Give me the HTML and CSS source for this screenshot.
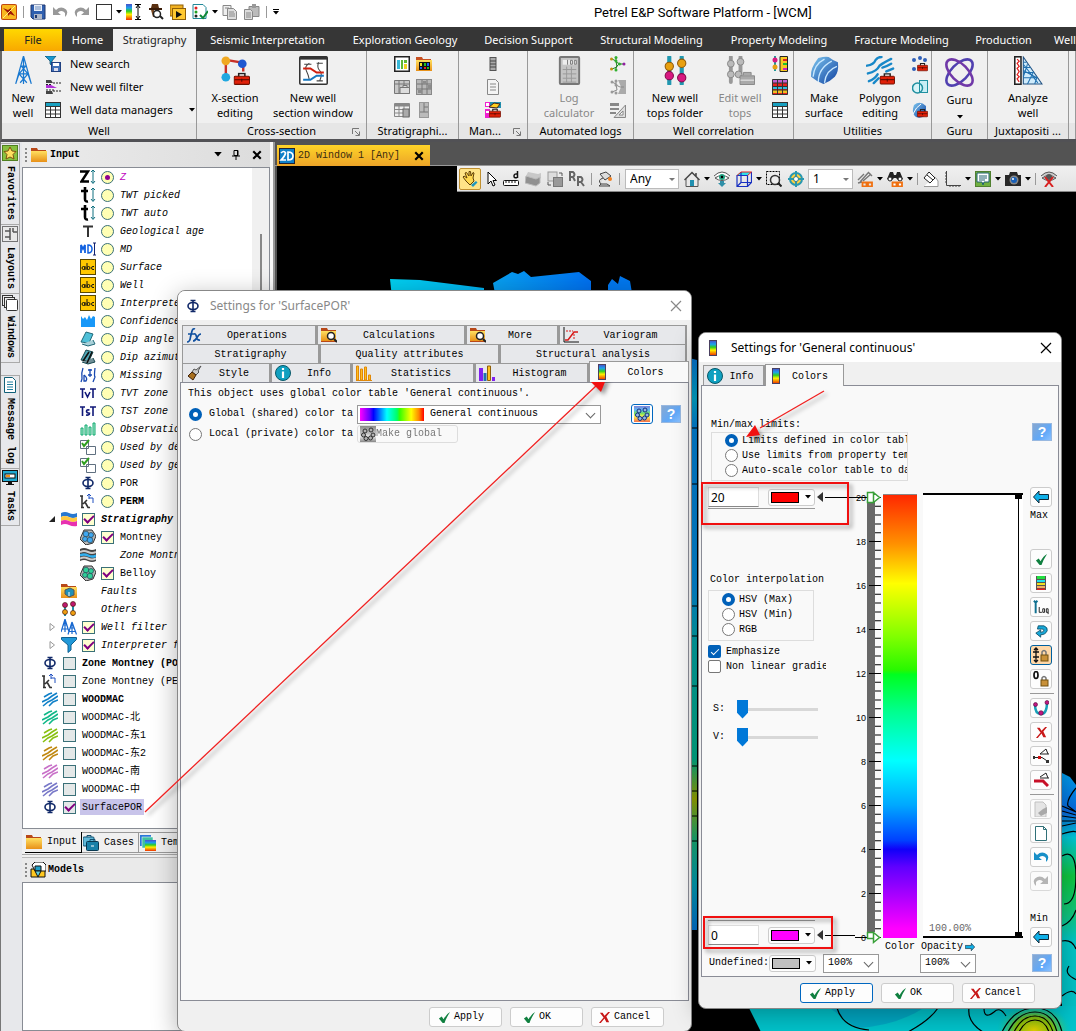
FILE: index.html
```html
<!DOCTYPE html>
<html lang="en">
<head>
<meta charset="utf-8">
<title>Petrel E&amp;P Software Platform - [WCM]</title>
<link rel="stylesheet" href="styles.css">
</head>
<body>
<svg class="sprite" aria-hidden="true">
  <defs>
    <linearGradient id="spectrum" x1="0" y1="0" x2="0" y2="1"><stop offset="0" stop-color="#4a50c8"/><stop offset=".25" stop-color="#1ba0f0"/><stop offset=".45" stop-color="#30d020"/><stop offset=".65" stop-color="#fff000"/><stop offset="1" stop-color="#f03000"/></linearGradient>
    <linearGradient id="blueish" x1="0" y1="0" x2="1" y2="1"><stop offset="0" stop-color="#7ec8f0"/><stop offset="1" stop-color="#1040a0"/></linearGradient>
    <linearGradient id="gold" x1="0" y1="0" x2="0" y2="1"><stop offset="0" stop-color="#ffe060"/><stop offset="1" stop-color="#e89018"/></linearGradient>
  </defs>
  <symbol id="toolbox" viewBox="0 0 16 12"><path d="M5 4V1h6v3" fill="none" stroke="#222" stroke-width="1.5"/><rect x=".5" y="3.500" width="15" height="8" rx="1" fill="#e02008" stroke="#701000"/><path d="M1 7h14M8 6v3" stroke="#500800"/></symbol>
  <symbol id="caret" viewBox="0 0 6 4"><path d="M0 0h6L3 3.500z" fill="currentColor"/></symbol>
  <symbol id="logo" viewBox="0 0 16 16"><rect width="16" height="16" rx="2" fill="#c04810"/><rect x="1" y="1" width="14" height="14" rx="1" fill="#f8b820"/><path d="M2 4l5 2 3-2v3l4 5-5-2-2 2V9z" fill="#a01808"/><path d="M14 2L2 14" stroke="#fff080"/></symbol>
  <symbol id="save" viewBox="0 0 16 16"><path d="M1 1h14v14H3l-2-2z" fill="#3060b0" stroke="#203870"/><rect x="4" y="1" width="8" height="6" fill="#e8eef8"/><path d="M5 3h6M5 5h6" stroke="#7090c0"/><rect x="4" y="10" width="8" height="5" fill="#b0b8c8"/><rect x="5" y="11" width="2" height="3" fill="#203870"/></symbol>
  <symbol id="undo" viewBox="0 0 16 16"><path d="M1 3v8h8L6 8.500q4-3 7 .5v4q4-4 1-7.500-5-4-10 .5z" fill="currentColor"/></symbol>
  <symbol id="redo" viewBox="0 0 16 16"><path d="M15 3v8H7l3-2.500Q6 5.500 3 9v4Q-1 9 2 5.500q5-4 10 .5z" fill="currentColor"/></symbol>
  <symbol id="box" viewBox="0 0 16 16"><rect x=".5" y=".5" width="15" height="15" fill="#fff" stroke="#333"/></symbol>
  <symbol id="rangebar" viewBox="0 0 16 16"><rect width="6" height="16" fill="url(#spectrum)"/><path d="M9 .5h6M9 15.500h6M12 2v12M10 4l2-3 2 3M10 12l2 3 2-3" fill="none" stroke="#000"/></symbol>
  <symbol id="detective" viewBox="0 0 16 16"><path d="M4 0h6l1 4H3z" fill="#5a3010"/><path d="M1 4h13v2H1z" fill="#3a1c08"/><path d="M3 6l2 7h2l-1-7z" fill="#7a4820"/><circle cx="9" cy="10" r="3.500" fill="#fff" stroke="#222" stroke-width="1.500"/><path d="M12 12l3 3" stroke="#222" stroke-width="2"/></symbol>
  <symbol id="play" viewBox="0 0 16 16"><rect x="0" y="1" width="13" height="11" fill="#f0b020" stroke="#906008"/><rect x="2.500" y="4.500" width="13" height="11" fill="#ffc830" stroke="#906008"/><path d="M6 7v7l6-3.500z" fill="#111"/></symbol>
  <symbol id="checklist" viewBox="0 0 16 16"><path d="M1 .5h10l3 3v11H1z" fill="#fff" stroke="#208898"/><circle cx="4" cy="4" r="1.500" fill="#e02020"/><circle cx="4" cy="8" r="1.500" fill="#20a020"/><circle cx="4" cy="12" r="1.500" fill="#222"/><path d="M8 11l3 3 5-7" fill="none" stroke="#108838" stroke-width="2"/></symbol>
  <symbol id="copy" viewBox="0 0 16 16"><path d="M1 1.500h8v10H1z" fill="#eee" stroke="#888"/><path d="M5.500 4.500h6l3 3v8h-9z" fill="#ddd" stroke="#888"/><path d="M7 8h5M7 10h6M7 12h6M3 4h4" stroke="#888"/></symbol>
  <symbol id="paste" viewBox="0 0 16 16"><path d="M5 2.500h10v10H5z" fill="#bbb" stroke="#888"/><rect x="8" y="0" width="4" height="4" fill="#999"/><path d="M.5 5.500h6l2 2v8h-8z" fill="#ddd" stroke="#888"/><path d="M2 9h5M2 11h5M2 13h5" stroke="#888"/></symbol>
  <symbol id="derrick" viewBox="0 0 16 26"><path d="M8 0L1 25M8 0l7 25M8 0v25M5.500 9h5M4 16h8M6 9l6 7 3 9M10 9l-6 7-3 9M4 16l7 8M12 16l-7 8" fill="none" stroke="#1878d0" stroke-width="1.100"/></symbol>
  <symbol id="search" viewBox="0 0 16 16"><path d="M0 0h11L7 5v5L5 8V5z" fill="#1898d0" stroke="#084868" stroke-width=".7"/><rect x="6.500" y="6.500" width="9" height="9" fill="#4070b8" stroke="#204080"/><rect x="8" y="7" width="6" height="3" fill="#fff"/><rect x="9" y="12" width="4" height="3" fill="#dde"/></symbol>
  <symbol id="wellfilter" viewBox="0 0 16 16"><path d="M1 1h5l2 3H1zM1 12h6l1 3H1z" fill="#444"/><path d="M1 6h5l6 3H1z" fill="#b030d8"/><path d="M8 4h8M8 12h8M1 11h8M1 5.500h6" stroke="#222" stroke-dasharray="2 1"/></symbol>
  <symbol id="table" viewBox="0 0 16 16"><rect x=".5" y=".5" width="15" height="15" fill="#fff" stroke="#333"/><rect x="1" y="1" width="14" height="3" fill="#18a0c0"/><path d="M1 4.500h14M1 8h14M1 12h14M5.500 4v11M10.500 4v11" stroke="#333"/></symbol>
  <symbol id="xsection" viewBox="0 0 30 30"><path d="M5 4l18 3v9M5 4v17" fill="none" stroke="#c83028" stroke-width="2.500"/><circle cx="5" cy="5" r="4.500" fill="#f0a820"/><circle cx="22" cy="8" r="4.500" fill="#2058d0"/><circle cx="5" cy="22" r="4.500" fill="#20a8e0"/><use href="#toolbox" x="13" y="17" width="17" height="13"/></symbol>
  <symbol id="sectionwin" viewBox="0 0 28 28"><rect x=".75" y=".75" width="26.500" height="26.500" rx="1" fill="#fff" stroke="#333" stroke-width="1.500"/><path d="M1 2h26" stroke="#333" stroke-width="3"/><path d="M10 7q-5 3-3 7t3 9M19 6q-2 5 1 8t0 10M5 8h7M17 7h6M17 24h6" fill="none" stroke="#444"/><path d="M4 12h7l6 4h7" fill="none" stroke="#d02010" stroke-width="2"/><path d="M4 23h7l6-4h7" fill="none" stroke="#1878c0" stroke-width="2"/></symbol>
  <symbol id="strat1" viewBox="0 0 16 16"><rect x=".75" y=".75" width="14.500" height="14.500" fill="#fff" stroke="#222" stroke-width="1.500"/><path d="M3 4h3v9H3z" fill="#38b8d8"/><path d="M7 4h2v9H7zM10 4h3v3h-3z" fill="#60b830"/><path d="M10 8h3v5h-3z" fill="#f0d020"/></symbol>
  <symbol id="strat2" viewBox="0 0 16 16"><path d="M0 1h6l1 2h8v12H0z" fill="#c85020"/><path d="M0 4h16v11H0z" fill="url(#gold)"/><path d="M3 6h11v8H3z" fill="#111"/><path d="M4 7h2v3H4z" fill="#f0e020"/><path d="M8 7h2v3H8zM11 11h2v2h-2z" fill="#20c020"/><path d="M11 7h2v3h-2zM4 11h2v2H4z" fill="#2060f0"/><path d="M8 11h2v2H8z" fill="#f02020"/></symbol>
  <symbol id="grid-box" viewBox="0 0 16 16"><path d="M.5 1.500h15v13H.5zM.5 5h15M5 1v13M10 1v5" fill="#c8c8c8" stroke="#777"/><path d="M6 8.500h9.500v6H6zM9 8V6.500h4V8" fill="#ddd" stroke="#777"/></symbol>
  <symbol id="grid-gray" viewBox="0 0 16 16"><rect x=".5" y=".5" width="15" height="15" fill="#b8b8b8" stroke="#888"/><path d="M1 5h14M1 10h14M6 1v14M11 1v14" stroke="#777"/><path d="M7 2h3v3H7zM12 6h3v4h-3zM2 11h4v3H2z" fill="#8c8c8c"/></symbol>
  <symbol id="table-gray" viewBox="0 0 16 16"><path d="M.5 1.500h15v13H.5z" fill="#eee" stroke="#888"/><path d="M1 3h14" stroke="#888" stroke-width="3"/><path d="M1 7.500h9M1 11h9M5 3v11M10 3v11" stroke="#888"/><rect x="9" y="7" width="6" height="8" fill="#aaa" stroke="#666"/></symbol>
  <symbol id="panel-gray" viewBox="0 0 16 16"><rect x="3.500" y=".5" width="9" height="15" fill="#bbb" stroke="#999"/><path d="M8 1v9M4 10h8M8 5h4" stroke="#777"/></symbol>
  <symbol id="bars-gray" viewBox="0 0 16 16"><rect x="5" y="1.500" width="6" height="13" fill="#aaa" stroke="#555"/><path d="M5 5h6M5 8h6M5 11h6" stroke="#444"/></symbol>
  <symbol id="page-gray" viewBox="0 0 16 16"><path d="M2.500.5h8l3 3v12h-11z" fill="#f4f4f4" stroke="#888"/><path d="M5 5h6M5 8h6M5 11h6" stroke="#888"/></symbol>
  <symbol id="manage" viewBox="0 0 16 16"><path d="M0 0h5v5H0zM0 7h5v9H0z" fill="#f020d0"/><path d="M1 1h3v3H1zM1 9h3v2H1z" fill="#fff"/><path d="M5 0h11v6H5z" fill="#2090b0"/><path d="M4 5l5-4 6 1-3 4z" fill="#ffd020" stroke="#422"/><use href="#toolbox" x="4" y="6" width="12" height="10"/></symbol>
  <symbol id="calc" viewBox="0 0 22 30"><rect x="1" y="1" width="20" height="28" rx="1" fill="#c4c4c4" stroke="#777" stroke-width="2"/><rect x="4" y="4" width="14" height="5" fill="#eee"/><path d="M9 4v5M12 4.500h2v4h-2zM16 4.500h2v4h-2z" fill="none" stroke="#777"/><path d="M4 14h14M4 18.500h14M4 23h14M4 27h14M8 11v16M13 11v16" stroke="#999"/></symbol>
  <symbol id="tree-color" viewBox="0 0 16 16"><path d="M2 3l4 2 1 6-5 2M6 2v4l4 2h4M6 14v-3l3-3" fill="none" stroke="#208020"/><g fill="#30b030"><circle cx="6" cy="1.500" r="1.500"/><circle cx="6" cy="5" r="1.500"/><circle cx="6" cy="14" r="1.500"/><circle cx="9.500" cy="8" r="1.500"/></g><circle cx="1.500" cy="3" r="1.500" fill="#c09010"/><circle cx="1.500" cy="13" r="1.500" fill="#c09010"/><circle cx="14" cy="8" r="1.500" fill="#9020a0"/></symbol>
  <symbol id="tree-gray" viewBox="0 0 16 16"><path d="M8 1h8v14H8l3-7z" fill="#aaa"/><path d="M2 3l4 2 1 6-5 2M6 2v4l4 2h4" fill="none" stroke="#888"/><g fill="#999"><circle cx="6" cy="2" r="1.500"/><circle cx="6" cy="6" r="1.500"/><circle cx="6" cy="14" r="1.500"/><circle cx="2" cy="3" r="1.500"/><circle cx="2" cy="13" r="1.500"/></g></symbol>
  <symbol id="tri-gray" viewBox="0 0 16 16"><path d="M0 1h9v3H0zM0 6h9v2H0zM0 10h6v2H0z" fill="#888"/><path d="M15.500 3v12.500H4z" fill="#ddd" stroke="#888"/><path d="M13 9v4h-4z" fill="#fff" stroke="#888"/></symbol>
  <symbol id="tops" viewBox="0 0 22 28"><path d="M5 1v26M17 1v26" stroke="#2098b0" stroke-width="4" stroke-linecap="round"/><circle cx="5" cy="10" r="4" fill="#e8a010" stroke="#905808"/><circle cx="17" cy="7" r="4" fill="#e8a010" stroke="#905808"/><circle cx="5" cy="19" r="4" fill="#d81880" stroke="#800848"/><circle cx="17" cy="21" r="4" fill="#d81880" stroke="#800848"/></symbol>
  <symbol id="tops-gray" viewBox="0 0 30 30"><path d="M5 1v26M15 1v20" stroke="#999" stroke-width="4" stroke-linecap="round"/><g fill="#bbb" stroke="#888"><circle cx="5" cy="8" r="3.500"/><circle cx="5" cy="19" r="3.500"/><circle cx="15" cy="6" r="3.500"/><circle cx="13" cy="19" r="3.500"/><path d="M14.500 20.500h15v9h-15zM18 20v-3h8v3" fill="#aaa"/></g><path d="M15 25h14" stroke="#eee"/></symbol>
  <symbol id="corr1" viewBox="0 0 16 16"><path d="M3 0v15" stroke="#209898" stroke-width="2"/><circle cx="3" cy="4" r="2.500" fill="#d81880"/><circle cx="3" cy="11" r="2.500" fill="#e8a010"/><path d="M8 .5h7.500v15H8z" fill="#f8c820" stroke="#222"/><path d="M11 4h4" stroke="#e02020" stroke-width="2"/><path d="M11 8h4" stroke="#20c030" stroke-width="2"/><path d="M11 13h4" stroke="#d020c0" stroke-width="2"/></symbol>
  <symbol id="corr2" viewBox="0 0 16 16"><path d="M.5.5h15v15H.5z" fill="#e82020" stroke="#333"/><path d="M1 1h14v3H1z" fill="#c060d0"/><path d="M1 8h14v2H1z" fill="#30c0e0"/><path d="M1 11h14v3H1z" fill="#f0c020"/><path d="M1 4h14M1 7.500h14M1 11h14M5.500 1v14M10.500 1v14" stroke="#333"/></symbol>
  <symbol id="surface" viewBox="0 0 28 28"><path d="M8 2q7-2 10-1 5 4 9 5 1 9-3 14-5 5-11 7Q7 25 1 20 0 12 8 2z" fill="url(#blueish)"/><path d="M3 20Q4 8 14 3M8 25Q8 12 21 5M14 26q1-12 12-16" fill="none" stroke="#c8e8ff" stroke-width="1.300"/></symbol>
  <symbol id="polygon" viewBox="0 0 30 30"><path d="M1 10q7-1 9-6 2-3 6-3M2 18q9-2 12-8 4-3 12-7M3 26q6-2 9-7M17 12q4-1 9-4M21 16l7-3M8 28l5-5" fill="none" stroke="#1888c8" stroke-width="2.500" stroke-linecap="round"/><use href="#toolbox" x="14" y="17" width="16" height="13"/></symbol>
  <symbol id="util1" viewBox="0 0 16 16"><g fill="#3060b8"><circle cx="2" cy="4" r="2"/><circle cx="8" cy="2" r="2"/><circle cx="13" cy="4" r="2"/><circle cx="2" cy="13" r="2"/></g><use href="#toolbox" x="5" y="6" width="11" height="10"/></symbol>
  <symbol id="util2" viewBox="0 0 16 16"><rect x="7.500" y="1.500" width="8" height="12" fill="#c8eef4" stroke="#2090a0"/><circle cx="5.500" cy="9" r="5" fill="#d8f4f8" stroke="#2090a0" stroke-width="1.500"/><path d="M7.500 4v9" stroke="#2090a0"/></symbol>
  <symbol id="util3" viewBox="0 0 16 16"><path d="M2 3q6-5 12 1v9q-5 4-10 2-5-4-2-12z" fill="url(#blueish)"/><path d="M1 12Q4 5 9 2" stroke="#fff" fill="none"/><use href="#toolbox" x="5" y="6" width="11" height="10"/></symbol>
  <symbol id="guru" viewBox="0 0 28 28"><g fill="none" stroke="#5040b0" stroke-width="2.500"><ellipse cx="14" cy="14" rx="8" ry="16" transform="rotate(45 14 14)"/><ellipse cx="14" cy="14" rx="8" ry="16" transform="rotate(-45 14 14)" stroke="#7038a8"/></g></symbol>
  <symbol id="analyze" viewBox="0 0 28 28"><rect x=".75" y=".75" width="6" height="26.500" fill="#fff" stroke="#222" stroke-width="1.500"/><path d="M3 3l2 2-2 2 2 3-2 2 2 3-2 3 2 2-2 2 2 3" fill="none" stroke="#e02020" stroke-width="1.200"/><path d="M9 1v26h18z" fill="#d0ecfc" stroke="#205080"/><path d="M9 6h3M9 11h7M9 16h10M9 21h14M9 14l13 7M9 8l14 18M13 27l6-12M9 20l4-12M20 27l2-6" fill="none" stroke="#2070b0"/></symbol>
  <symbol id="launcher" viewBox="0 0 8 8"><path d="M.5 6V.5H7M3 3l4 4M7.500 3.500v4h-4" fill="none" stroke="#777"/></symbol>
  <symbol id="star" viewBox="0 0 16 16"><rect x=".5" y=".5" width="15" height="15" fill="#88c040" stroke="#508020"/><path d="M8 2l2 4 4 .5-3 3 1 4.500-4-2-4 2 1-4.500-3-3L6 6z" fill="#ffe060" stroke="#805010"/></symbol>
  <symbol id="layouts" viewBox="0 0 16 16"><rect x=".5" y=".5" width="15" height="15" fill="#e8e8e8" stroke="#000" stroke-dasharray="1 1"/><path d="M3 5h5M8 2v12M11 6h4M11 2v4M3 11h5" stroke="#555" stroke-width="1.500"/></symbol>
  <symbol id="windows" viewBox="0 0 16 16"><g fill="#eee" stroke="#333"><rect x=".5" y=".5" width="10" height="10"/><rect x="2.500" y="2.500" width="10" height="10"/><rect x="4.500" y="4.500" width="11" height="11" rx="1" fill="#fff"/></g></symbol>
  <symbol id="note" viewBox="0 0 16 16"><path d="M2.500.5h8l3 3v12h-11z" fill="#fff" stroke="#106078"/><path d="M5 5h6M5 7.500h6M5 10h6M5 12.500h6" stroke="#2080a0"/></symbol>
  <symbol id="tasks" viewBox="0 0 16 16"><rect x=".5" y=".5" width="15" height="11" fill="#20a8d0" stroke="#111"/><rect x="3" y="4" width="10" height="4" fill="#fff" stroke="#111"/><path d="M4 6h4" stroke="#f09010" stroke-width="2"/><path d="M6 12h4v2h2v1H4v-1h2z" fill="#111"/></symbol>
  <symbol id="folder" viewBox="0 0 16 14"><path d="M0 0h6l1 2h8v3H0z" fill="#b84818"/><path d="M0 3h16v11H0z" fill="url(#gold)"/></symbol>
  <symbol id="pin" viewBox="0 0 8 10"><path d="M2 .5h4v5H2zM0 6h8M4 6v4" fill="none" stroke="#000"/><path d="M5 1h1v5H5z"/></symbol>
  <symbol id="cross" viewBox="0 0 8 8"><path d="M1 1l6 6M7 1L1 7" stroke="currentColor" stroke-width="1.700"/></symbol>
  <symbol id="thincross" viewBox="0 0 12 12"><path d="M1 1l10 10M11 1L1 11" stroke="currentColor" stroke-width="1.200"/></symbol>
  <symbol id="zarrow" viewBox="0 0 16 16"><path d="M0 2.500h8L1.500 12.500H9" fill="none" stroke="#000" stroke-width="2.400"/><path d="M13 1v13M11 3l2-2 2 2M11 12l2 2.500 2-2.500" fill="none" stroke="#107080"/></symbol>
  <symbol id="tarrow" viewBox="0 0 16 16"><path d="M5 0v12q0 3 3 2.500M1 4h7" fill="none" stroke="#000" stroke-width="2.600"/><path d="M13 1v13M11 3l2-2 2 2M11 12l2 2.500 2-2.500" fill="none" stroke="#107080"/></symbol>
  <symbol id="tee" viewBox="0 0 16 16"><path d="M3 3.500h10M8 3v11" stroke="#333" stroke-width="2"/></symbol>
  <symbol id="md" viewBox="0 0 16 16"><path d="M1 12V4l2 4 2-4v8" fill="none" stroke="#1060e0" stroke-width="1.800"/><path d="M8 4v8q4 0 4-4T8 4z" fill="none" stroke="#1060e0" stroke-width="1.500"/><path d="M14.500 2v12M13 2h3M13 14h3" stroke="#102070"/></symbol>
  <symbol id="abc" viewBox="0 0 16 16"><rect x=".5" y=".5" width="15" height="15" fill="#ffc800" stroke="#5a4800"/><g fill="none" stroke="#111"><circle cx="3.500" cy="9" r="1.500"/><path d="M5 7v4M7 4v7M11 4"/><circle cx="8.500" cy="9" r="1.500"/><path d="M14 7.500q-2.500-.5-2.500 1.500t2.500 1.500"/></g></symbol>
  <symbol id="conf" viewBox="0 0 16 16"><path d="M1 14V3l2 3 2-2 2 3 2-5 2 4 2-3 2 1v10z" fill="#1898f8"/></symbol>
  <symbol id="dip" viewBox="0 0 16 16"><path d="M6 1l7 2-4 9-8-1z" fill="#50c0d8" stroke="#206878"/><path d="M13 9l2 4-7 2-6-2" fill="#a8d0d8" stroke="#206878"/></symbol>
  <symbol id="azi" viewBox="0 0 16 16"><path d="M6 1l7 2-4 9-8-1z" fill="#50a8b8" stroke="#184850"/><path d="M13 9l2 4-7 2-6-2" fill="#709098" stroke="#184850"/><path d="M9 3l-6 9M12 3l-5 11" stroke="#111" stroke-width="1.600"/></symbol>
  <symbol id="missing" viewBox="0 0 16 16"><path d="M3 1Q1 6 2 12l-1 3M15 1q-1 8 0 9l-2 5M4 8v6h2q2-3-2-6M10 2v8M8 3h4M8 8h4" fill="none" stroke="#1848b0" stroke-width="1.300"/></symbol>
  <symbol id="tvt" viewBox="0 0 16 16"><path d="M0 4h5M2.500 4v9M5 7l2.500 5L10 7M10 4h6M13 4v9" fill="none" stroke="#101878" stroke-width="1.600"/></symbol>
  <symbol id="tst" viewBox="0 0 16 16"><path d="M0 4h5M2.500 4v9M9.500 7q-3-.5-3 1.200t3 2q0 2.300-3.500 1.800M10 4h6M13 4v9" fill="none" stroke="#101878" stroke-width="1.600"/></symbol>
  <symbol id="obs" viewBox="0 0 16 16"><path d="M1 14V7h2v7zM5 14V4h2v10zM9 14V6h2v8zM13 14V2h2v12z" fill="#b0f0d0" stroke="#10a870"/></symbol>
  <symbol id="used" viewBox="0 0 16 16"><path d="M.5 1.500h8v8h-8zM6.500 7.500h9v8h-9z" fill="#fff" stroke="#607080"/><path d="M2 4l2 3 5-6" fill="none" stroke="#30a020" stroke-width="2"/></symbol>
  <symbol id="phi" viewBox="0 0 16 16"><ellipse cx="8" cy="8" rx="5" ry="3.500" fill="none" stroke="#102868" stroke-width="1.600"/><path d="M8 2v12M5.500 2.500h5M5.500 13.500h5" stroke="#102868" stroke-width="1.600"/></symbol>
  <symbol id="perm" viewBox="0 0 16 16"><path d="M2 3v12M0 3h3M1 14.500h3M3 11l4-4M5 9l3 5.500h2" fill="none" stroke="#333" stroke-width="1.600"/><path d="M9 6V1M7 3l2-2 2 2M9 5h4v5" fill="none" stroke="#2050c0"/></symbol>
  <symbol id="strat" viewBox="0 0 16 16"><path d="M0 2q4-2 8 0t8 0v4q-4 2-8 0T0 6z" fill="#2878d0"/><path d="M0 6q4-2 8 0t8 0v4q-4 2-8 0t-8 0z" fill="#ffc840"/><path d="M0 10q4-2 8 0t8 0v5q-4 1-8-1t-8 0z" fill="#e830b0"/></symbol>
  <symbol id="rock" viewBox="0 0 16 16"><path d="M4 1h8l4 6-3 7-7 2-6-6z" fill="#b8b8b8" stroke="#333"/><g fill="currentColor" stroke="#245" stroke-width=".7"><circle cx="6" cy="5" r="2.800"/><circle cx="11" cy="6" r="2.500"/><circle cx="5" cy="10" r="2.500"/><circle cx="10" cy="11" r="2.800"/></g></symbol>
  <symbol id="zone" viewBox="0 0 16 16"><path d="M0 2q4-2 8 0t8 0v12q-4 2-8 0t-8 0z" fill="#444"/><path d="M0 5q4-2 8 0t8 0M0 11.500q4-2 8 0t8 0" fill="none" stroke="#ccc" stroke-width="2"/><path d="M0 8.500q4-2 8 0t8 0" fill="none" stroke="#30b0f0" stroke-width="2.500"/></symbol>
  <symbol id="faults" viewBox="0 0 16 16"><path d="M0 1h6l1 2h8v12H0z" fill="#b84818"/><path d="M0 4h16v11H0z" fill="url(#gold)"/><path d="M4 7l5-2 4 2v5l-5 2-4-3z" fill="#2090b8" stroke="#555"/><path d="M8 9v4" stroke="#fff"/></symbol>
  <symbol id="others" viewBox="0 0 16 16"><path d="M4 2v13M12 2v13" stroke="#2090a8" stroke-width="2"/><g stroke="#502010" stroke-width=".7"><circle cx="4" cy="4" r="2.500" fill="#c01870"/><circle cx="12" cy="3" r="2.500" fill="#c01870"/><circle cx="4" cy="11" r="2.500" fill="#f0a010"/><circle cx="12" cy="12" r="2.500" fill="#f0a010"/></g></symbol>
  <symbol id="wells" viewBox="0 0 16 16"><path d="M4 0L0 13M4 0l4 13M4 0v13M2 6h4M1 10h6M11 3L7 15.500M11 3l4.500 12.500M11 3v12M9 9h4M8 12.500h6" fill="none" stroke="#1868d0" stroke-width="1.200"/></symbol>
  <symbol id="funnel" viewBox="0 0 16 16"><path d="M.5.5h15v2L10 8v5l-3 2.500V8L.5 2.500z" fill="#2098d8" stroke="#106090"/></symbol>
  <symbol id="lines" viewBox="0 0 16 16"><path d="M2 6l5-3 3-1M0 11l6-3 4-3 5-3M1 15l5-4 4-2 6-4M7 15l4-4 5-2" fill="none" stroke="currentColor" stroke-width="1.600"/></symbol>
  <symbol id="cases" viewBox="0 0 16 16"><rect y="2" width="11" height="9" rx="1" fill="#60b8d8" stroke="#105070"/><path d="M4 2V.5h4V2M7 6V4.500h5V6" fill="none" stroke="#105070"/><rect x="3.500" y="6.500" width="12" height="9" rx="1" fill="#1880a8" stroke="#083850"/><path d="M8 11h3" stroke="#fff"/></symbol>
  <symbol id="templates" viewBox="0 0 16 16"><rect width="11" height="11" fill="#2878d8"/><rect x="2" y="2" width="11" height="11" fill="#40c0a0" stroke="#fff" stroke-width=".5"/><rect x="5" y="5" width="11" height="11" fill="url(#spectrum)"/></symbol>
  <symbol id="models" viewBox="0 0 16 16"><path d="M1 7h14v8H1z" fill="#ffc820" stroke="#111"/><path d="M2 3l3-3h8l3 3v6H5z" fill="#fff" stroke="#111"/><path d="M5 4h6v5H5z" fill="#20a0c8" stroke="#111"/><path d="M5 9h6l-3 6z" fill="#60d0e0" stroke="#111"/></symbol>
  <symbol id="icon2d" viewBox="0 0 16 16"><rect x=".5" y=".5" width="15" height="15" fill="#1080c8" stroke="#223"/><path d="M2 5q3-3 4.500 0Q6 8 2 12h5M9 4v8q5 0 5-4T9 4z" fill="none" stroke="#fff" stroke-width="1.700"/></symbol>
  <symbol id="hand" viewBox="0 0 16 16"><path d="M4 10L1 6l1-1 3 2-2-5 1.500-.5L7 5 7 .5h1.500L9 5l2-3.500L12 2l-1 5 1 3-4 4z" fill="#ffd850" stroke="#604008"/><path d="M9 14l5-4 1.500 1.500L11 16z" fill="#2098c0"/></symbol>
  <symbol id="pointer" viewBox="0 0 10 16"><path d="M1 1v12l3-3 2 5 2-1-2-4.500h3.500z" fill="#fff" stroke="#000"/></symbol>
  <symbol id="ruler" viewBox="0 0 16 16"><rect x=".5" y="9.500" width="15" height="5" rx="1" fill="#fff" stroke="#111"/><path d="M3 10v2M6 10v2M9 10v2M12 10v2" stroke="#111"/><path d="M14.500 0v7M14 3q-3-.5-3 2t3 1.500" fill="none" stroke="#111" stroke-width="1.500"/></symbol>
  <symbol id="layers" viewBox="0 0 16 16"><path d="M3 1l10 2 3-1v5l-4 3-12-3z" fill="#c8c8c8"/><path d="M1 5l10 3 4-2v6l-4 3-11-3z" fill="#909090" stroke="#bbb"/></symbol>
  <symbol id="swap" viewBox="0 0 16 16"><rect x="1" y="1" width="9" height="9" fill="#ddd" stroke="#999"/><rect x="6.500" y="6.500" width="9" height="9" fill="#999" stroke="#777"/><path d="M12 2h3v3M4 14H1v-3" fill="none" stroke="#555"/></symbol>
  <symbol id="rr" viewBox="0 0 16 16"><path d="M1 10V1h3q3 2.500 0 5H1M4 6l2 4M9 15V6h3q3 2.500 0 5H9M12 11l3 4" fill="none" stroke="#666" stroke-width="2"/></symbol>
  <symbol id="lamp" viewBox="0 0 16 16"><path d="M2 15h11l-3-2H4zM4 13q-4-4 2-6M3 3l6-2 5 4-6 4z" fill="#ddd" stroke="#444"/><circle cx="13" cy="8" r="2" fill="#f08020"/></symbol>
  <symbol id="home" viewBox="0 0 16 16"><path d="M2 8v7.500h12V8" fill="#e8e8e8" stroke="#555"/><path d="M.5 9L8 1.500 15.500 9M12 2v4" fill="none" stroke="#444" stroke-width="1.500"/><rect x="6" y="9" width="4" height="6" fill="#2090b0"/></symbol>
  <symbol id="eye" viewBox="0 0 16 16"><path d="M0 5q8-8 16 0M1 7q7-5 14 0-7 5-14 0z" fill="#fff" stroke="#555"/><circle cx="8" cy="6" r="3" fill="#20a080"/><circle cx="8" cy="6" r="1.200"/><path d="M6 10h4v2h2l-4 4-4-4h2z" fill="#3090a8"/></symbol>
  <symbol id="cube" viewBox="0 0 16 16"><path d="M1 4l4-3h10l-3 3z" fill="#30e0e8"/><path d="M1 4.500h10.500v11H1zM5 1v10.500h10.500M5 11.500l-4 4M11.500 15.500l4-4V1" fill="none" stroke="#1830c0" stroke-width="1.200"/><path d="M1 4.500L5 1h10.500l-4 3.500" fill="none" stroke="#e02020"/></symbol>
  <symbol id="zoombox" viewBox="0 0 16 16"><rect x=".5" y=".5" width="13" height="13" fill="none" stroke="#000" stroke-dasharray="2 1"/><circle cx="9" cy="9" r="4.500" fill="#eee" stroke="#333" stroke-width="1.500"/><path d="M12 12l3.500 3.500" stroke="#222" stroke-width="2"/></symbol>
  <symbol id="target" viewBox="0 0 16 16"><circle cx="8" cy="8" r="6" fill="#ffd040" stroke="#2898b0" stroke-width="2"/><circle cx="8" cy="8" r="2.500" fill="#fff" stroke="#207888"/><path d="M8 0v5M8 11v5M0 8h5M11 8h5" stroke="#2898b0" stroke-width="2"/></symbol>
  <symbol id="linkpts" viewBox="0 0 16 16"><path d="M1 9l6-6M3 11l8-9M6 10l8-7M1 12l4-1M11 1l4 4" stroke="#777" stroke-width="1.400"/><path d="M5.500 11.500h4v4h-4zM11 11.500h4v4h-4z" fill="none" stroke="#f07010" stroke-width="1.800"/></symbol>
  <symbol id="binoc" viewBox="0 0 16 16"><path d="M3 1h3l1 3h2l1-3h3l3 7-4 2-3-3H7l-3 3-4-2z" fill="#222"/><circle cx="3" cy="8" r="2" fill="#fff" stroke="#222"/><circle cx="13" cy="8" r="2" fill="#fff" stroke="#222"/><path d="M5.500 11.500h4v4h-4zM11 11.500h4v4h-4z" fill="#fff" stroke="#f07010" stroke-width="1.800"/></symbol>
  <symbol id="eraser" viewBox="0 0 16 16"><path d="M1 15.500h14V10q-2-4-4-4" fill="#fff" stroke="#999"/><path d="M6 1l6 6-5 5-6-5zM4 4l6 5" fill="#fff" stroke="#222"/></symbol>
  <symbol id="axes" viewBox="0 0 16 16"><path d="M1.500 0v14.500H16M0 2h1M0 5h1M0 8h1M0 11h1M5 15v1M8 15v1M11 15v1M14 15v1" fill="none" stroke="#444"/></symbol>
  <symbol id="comment" viewBox="0 0 16 16"><rect x=".5" y=".5" width="15" height="15" fill="#70b040" stroke="#508030"/><path d="M2 2h12v9H9l-1 3-1-3H2z" fill="#fff" stroke="#206070"/><path d="M4 5h8M4 7h8M4 9h6" stroke="#206070"/></symbol>
  <symbol id="camera" viewBox="0 0 16 16"><path d="M0 4h4l1-3h7l1 3h3v11H0z" fill="#282828"/><circle cx="9" cy="9" r="4.500" fill="#888"/><circle cx="9" cy="9" r="3" fill="#1860b8"/><circle cx="8" cy="8" r="1" fill="#fff"/></symbol>
  <symbol id="eyex" viewBox="0 0 16 16"><path d="M0 5q8-8 16 0M1 7q7-5 14 0-7 5-14 0z" fill="#ccc" stroke="#555"/><circle cx="8" cy="6" r="3" fill="#555"/><path d="M4 6l8 10M12 6L4 16" stroke="#d82020" stroke-width="2"/></symbol>
  <symbol id="fx" viewBox="0 0 16 16"><path d="M1 15q3 0 3.500-5L6 4q1-3 3-2M2 7h6M8 7q2-.5 2.500 3t3.500 3M15 7q-2 0-4 3.500T7 14" fill="none" stroke="#1050a0" stroke-width="1.700"/></symbol>
  <symbol id="foldersearch" viewBox="0 0 16 16"><path d="M0 1h6l1 2h8v12H0z" fill="#b84818"/><path d="M0 4h15v10H0z" fill="url(#gold)"/><circle cx="10" cy="9" r="3.500" fill="#fff" stroke="#222" stroke-width="1.500"/><path d="M13 12l3 3" stroke="#222" stroke-width="2"/></symbol>
  <symbol id="vario" viewBox="0 0 16 16"><path d="M1 0v15h15" fill="none" stroke="#111"/><path d="M2 13h3l6-8h4" fill="none" stroke="#d81818" stroke-width="1.500"/><path d="M3 4h7M11 7v6" stroke="#d81818" stroke-dasharray="2 1"/></symbol>
  <symbol id="brush" viewBox="0 0 16 16"><path d="M15 1l-5 4-2-1-2 3 4 3 3-3-1-1z" fill="#ccc" stroke="#555"/><path d="M6 7l4 3-3 5-5-4z" fill="#a87020" stroke="#402008"/></symbol>
  <symbol id="info" viewBox="0 0 16 16"><circle cx="8" cy="8" r="7.500" fill="#10a0c0" stroke="#085868"/><path d="M8 3v2M8 6.500V13" stroke="#fff" stroke-width="2.200"/></symbol>
  <symbol id="stats" viewBox="0 0 16 16"><path d="M.5 15V1h2v14zM4.500 15V4h2v11zM8.500 15V2h2v13zM12.500 15v-5h2v5z" fill="#ffc020" stroke="#e08808"/><path d="M0 15.500h16" stroke="#e08808"/></symbol>
  <symbol id="histo" viewBox="0 0 16 16"><path d="M0 3h4v13H0zM13 12h3v4h-3z" fill="#8020f0"/><path d="M4.500 8h3v8h-3z" fill="#2070b0"/><path d="M8.500 1h3v14.500h-3z" fill="#ffc020" stroke="#906008"/></symbol>
  <symbol id="colorbar" viewBox="0 0 8 16"><rect x=".5" y=".5" width="7" height="15" fill="url(#spectrum)" stroke="#4a4060"/></symbol>
  <symbol id="palette" viewBox="0 0 16 16"><rect width="16" height="16" fill="url(#spectrum)" opacity=".7"/><g fill="#90b8e0" stroke="#103080"><circle cx="5" cy="5" r="2"/><circle cx="11" cy="4" r="2"/><circle cx="3.500" cy="9" r="2"/><circle cx="13" cy="9" r="2"/><circle cx="6" cy="12.500" r="2"/><circle cx="10.500" cy="12" r="2"/></g></symbol>
  <symbol id="check" viewBox="0 0 14 14"><path d="M1 8l3-2 2 3q3-6 7-8Q9 7 7 13H5z" fill="#108040"/></symbol>
  <symbol id="redx" viewBox="0 0 14 14"><path d="M2 2l3 0 2 3 4-4 2 0-4 5 3 6-3 0-2-4-4 5-2 0 5-6z" fill="#c81818"/></symbol>
  <symbol id="arrowleft" viewBox="0 0 16 14"><path d="M.5 7L6 1v3.500h9.500v5H6V13z" fill="#10b0e8" stroke="#102838"/></symbol>
  <symbol id="legend" viewBox="0 0 16 16"><path d="M3 1h10v14H3z" fill="#555"/><path d="M4 1h8v3H4z" fill="#20e040"/><path d="M4 5h8v2H4z" fill="#20e0f0"/><path d="M4 8h8v2H4z" fill="#f0e020"/><path d="M4 11h8v2H4z" fill="#f0b060"/><path d="M4 13.500h8V15H4z" fill="#e02020"/></symbol>
  <symbol id="log" viewBox="0 0 18 16"><path d="M1 1l2 2 2-2M3 3v12" fill="none" stroke="#107090" stroke-width="2.200"/><path d="M7 8v6h3M11 10h2v4h-2zM17 16v-6h-2v4h2" fill="none" stroke="#111"/></symbol>
  <symbol id="turn" viewBox="0 0 16 16"><path d="M4 1h7q5 2 4 6-2 5-8 5v3l-6-5 6-4v3q4 0 4-3 0-1-3-1H3z" fill="#18a8d8" stroke="#084860"/></symbol>
  <symbol id="lockaxis" viewBox="0 0 16 16"><path d="M3 1v14M1 3l2-2 2 2M0 5h6M0 10h6M1 13l2 2 2-2" fill="none" stroke="#111" stroke-width="1.300"/><path d="M9 8V5q2-3 4 0v3" fill="none" stroke="#777" stroke-width="1.500"/><rect x="8" y="8" width="7" height="6" fill="#c89038" stroke="#705010"/></symbol>
  <symbol id="lockzero" viewBox="0 0 16 16"><ellipse cx="3" cy="4" rx="2" ry="3.500" fill="none" stroke="#111" stroke-width="1.700"/><path d="M9 10V7q2-3 4 0v3" fill="none" stroke="#777" stroke-width="1.500"/><rect x="8" y="9" width="7" height="6" fill="#c89038" stroke="#705010"/></symbol>
  <symbol id="magnet" viewBox="0 0 16 16"><path d="M2 5q0 9 6 9t6-12" fill="none" stroke="#18a0b8" stroke-width="2.500"/><g fill="#c01880" stroke="#500838" stroke-width=".6"><circle cx="2.500" cy="4.500" r="2"/><circle cx="8" cy="13" r="2.300"/><circle cx="14" cy="2.500" r="2"/></g></symbol>
  <symbol id="nodes" viewBox="0 0 16 16"><path d="M0 9.500h9l6 4M7 6l6-5 2 5M7 6h9" fill="none" stroke="#222"/><rect x="5" y="8" width="3" height="3" fill="#d01010"/><path d="M0 8h2v3H0zM13 12h3v3h-3z" fill="#333"/></symbol>
  <symbol id="curve" viewBox="0 0 16 16"><path d="M7 5l6-4 2 5M7 6h9" fill="none" stroke="#222"/><path d="M1 9h9l5 5" fill="none" stroke="#c81028" stroke-width="3"/></symbol>
  <symbol id="pagebrush" viewBox="0 0 16 16"><path d="M2 1h8l3 3v12H2z" fill="#ddd" stroke="#aaa"/><path d="M14 6l-4 2-5 4 3 3 6-3z" fill="#888"/></symbol>
  <symbol id="page" viewBox="0 0 16 16"><path d="M2.500 1.500h8l3 3v11h-11z" fill="#fff" stroke="#307078"/><path d="M10.500 1.500v3h3" fill="none" stroke="#307078"/></symbol>
</svg>

<header class="titlebar">
  <div class="quick">
    <svg class="i16"><use href="#logo"/></svg><span class="vsep"></span>
    <svg class="i16"><use href="#save"/></svg>
    <svg class="i16 gray"><use href="#undo"/></svg>
    <svg class="i16 gray"><use href="#redo"/></svg>
    <svg class="i16"><use href="#box"/></svg><svg class="caret"><use href="#caret"/></svg>
    <svg class="i16"><use href="#rangebar"/></svg>
    <svg class="i16"><use href="#detective"/></svg>
    <svg class="i16"><use href="#play"/></svg>
    <svg class="i16"><use href="#checklist"/></svg><svg class="caret"><use href="#caret"/></svg>
    <svg class="i16"><use href="#copy"/></svg>
    <svg class="i16"><use href="#paste"/></svg><span class="vsep"></span>
    <svg class="caret more"><use href="#caret"/></svg>
  </div>
  <h1 class="app-title">Petrel E&amp;P Software Platform - [WCM]</h1>
</header>

<nav class="ribbon-tabs">
  <button class="rtab file">File</button>
  <button class="rtab">Home</button>
  <button class="rtab current">Stratigraphy</button>
  <button class="rtab">Seismic Interpretation</button>
  <button class="rtab">Exploration Geology</button>
  <button class="rtab">Decision Support</button>
  <button class="rtab">Structural Modeling</button>
  <button class="rtab">Property Modeling</button>
  <button class="rtab">Fracture Modeling</button>
  <button class="rtab">Production</button>
  <button class="rtab last">Well</button>
</nav>

<section class="ribbon">
  <div class="group"><div class="gbody">
    <button class="big narrow"><svg class="bigicon"><use href="#derrick"/></svg>New<br>well</button>
    <div class="rows">
      <button class="small"><svg class="i16"><use href="#search"/></svg>New search</button>
      <button class="small"><svg class="i16"><use href="#wellfilter"/></svg>New well filter</button>
      <button class="small"><svg class="i16"><use href="#table"/></svg>Well data managers<svg class="caret push"><use href="#caret"/></svg></button>
    </div></div><div class="glabel">Well</div></div>
  <div class="group"><div class="gbody">
    <button class="big wide"><svg class="bigicon"><use href="#xsection"/></svg>X-section<br>editing</button>
    <button class="big wider"><svg class="bigicon"><use href="#sectionwin"/></svg>New well<br>section window</button>
  </div><div class="glabel">Cross-section<svg class="launch"><use href="#launcher"/></svg></div></div>
  <div class="group"><div class="gbody centered"><div class="icons two">
    <svg class="i16"><use href="#strat1"/></svg><svg class="i16"><use href="#strat2"/></svg>
    <svg class="i16"><use href="#grid-box"/></svg><svg class="i16"><use href="#grid-gray"/></svg>
    <svg class="i16"><use href="#table-gray"/></svg><svg class="i16"><use href="#panel-gray"/></svg>
  </div></div><div class="glabel">Stratigraphi...</div></div>
  <div class="group"><div class="gbody centered"><div class="icons">
    <svg class="i16"><use href="#bars-gray"/></svg><svg class="i16"><use href="#page-gray"/></svg><svg class="i16"><use href="#manage"/></svg>
  </div></div><div class="glabel off">Man...<svg class="launch"><use href="#launcher"/></svg></div></div>
  <div class="group"><div class="gbody">
    <button class="big widest disabled"><svg class="bigicon"><use href="#calc"/></svg>Log<br>calculator</button>
    <div class="icons tight"><svg class="i16"><use href="#tree-color"/></svg><svg class="i16"><use href="#tree-gray"/></svg><svg class="i16"><use href="#tri-gray"/></svg></div>
  </div><div class="glabel">Automated logs</div></div>
  <div class="group"><div class="gbody">
    <button class="big widest"><svg class="bigicon"><use href="#tops"/></svg>New well<br>tops folder</button>
    <button class="big mid disabled"><svg class="bigicon"><use href="#tops-gray"/></svg>Edit well<br>tops</button>
    <div class="icons tight"><svg class="i16"><use href="#corr1"/></svg><svg class="i16"><use href="#corr2"/></svg><svg class="i16"><use href="#table"/></svg></div>
  </div><div class="glabel">Well correlation</div></div>
  <div class="group"><div class="gbody snug">
    <button class="big mid"><svg class="bigicon"><use href="#surface"/></svg>Make<br>surface</button>
    <button class="big mid"><svg class="bigicon"><use href="#polygon"/></svg>Polygon<br>editing</button>
    <div class="icons tight"><svg class="i16"><use href="#util1"/></svg><svg class="i16"><use href="#util2"/></svg><svg class="i16"><use href="#util3"/></svg></div>
  </div><div class="glabel">Utilities</div></div>
  <div class="group"><div class="gbody centered">
    <button class="big mid"><svg class="bigicon"><use href="#guru"/></svg>Guru<svg class="caret below"><use href="#caret"/></svg></button>
  </div><div class="glabel">Guru</div></div>
  <div class="group"><div class="gbody centered">
    <button class="big mid"><svg class="bigicon"><use href="#analyze"/></svg>Analyze<br>well</button>
  </div><div class="glabel">Juxtapositi ...</div></div>
  <div class="group"><div class="gbody"></div><div class="glabel"></div></div>
</section>

<main class="workspace">
  <aside class="rail">
    <button class="vtab"><svg class="i16"><use href="#star"/></svg><span>Favorites</span></button>
    <button class="vtab"><svg class="i16"><use href="#layouts"/></svg><span>Layouts</span></button>
    <button class="vtab"><svg class="i16"><use href="#windows"/></svg><span>Windows</span></button>
    <button class="vtab apart"><svg class="i16"><use href="#note"/></svg><span>Message log</span></button>
    <button class="vtab"><svg class="i16"><use href="#tasks"/></svg><span>Tasks</span></button>
  </aside>

  <section class="explorer">
    <header class="pane-head"><span class="grip"></span><svg class="i16"><use href="#folder"/></svg><b>Input</b>
      <span class="pane-tools"><svg class="caret wide-caret"><use href="#caret"/></svg><svg class="i10"><use href="#pin"/></svg><svg class="i10"><use href="#cross"/></svg></span></header>
    <div class="treebox">
    <ul class="tree">
      <li class="l2 it"><svg class="i16"><use href="#zarrow"/></svg><input type="radio" name="att" id="a1" checked><label for="a1" class="violet">Z</label></li>
      <li class="l2 it"><svg class="i16"><use href="#tarrow"/></svg><input type="radio" name="att" id="a2"><label for="a2">TWT picked</label></li>
      <li class="l2 it"><svg class="i16"><use href="#tarrow"/></svg><input type="radio" name="att" id="a3"><label for="a3">TWT auto</label></li>
      <li class="l2 it"><svg class="i16"><use href="#tee"/></svg><input type="radio" name="att" id="a4"><label for="a4">Geological age</label></li>
      <li class="l2 it"><svg class="i16"><use href="#md"/></svg><input type="radio" name="att" id="a5"><label for="a5">MD</label></li>
      <li class="l2 it"><svg class="i16"><use href="#abc"/></svg><input type="radio" name="att" id="a6"><label for="a6">Surface</label></li>
      <li class="l2 it"><svg class="i16"><use href="#abc"/></svg><input type="radio" name="att" id="a7"><label for="a7">Well</label></li>
      <li class="l2 it"><svg class="i16"><use href="#abc"/></svg><input type="radio" name="att" id="a8"><label for="a8">Interpreter</label></li>
      <li class="l2 it"><svg class="i16"><use href="#conf"/></svg><input type="radio" name="att" id="a9"><label for="a9">Confidence</label></li>
      <li class="l2 it"><svg class="i16"><use href="#dip"/></svg><input type="radio" name="att" id="a10"><label for="a10">Dip angle</label></li>
      <li class="l2 it"><svg class="i16"><use href="#azi"/></svg><input type="radio" name="att" id="a11"><label for="a11">Dip azimuth</label></li>
      <li class="l2 it"><svg class="i16"><use href="#missing"/></svg><input type="radio" name="att" id="a12"><label for="a12">Missing</label></li>
      <li class="l2 it"><svg class="i16"><use href="#tvt"/></svg><input type="radio" name="att" id="a13"><label for="a13">TVT zone</label></li>
      <li class="l2 it"><svg class="i16"><use href="#tst"/></svg><input type="radio" name="att" id="a14"><label for="a14">TST zone</label></li>
      <li class="l2 it"><svg class="i16"><use href="#obs"/></svg><input type="radio" name="att" id="a15"><label for="a15">Observation</label></li>
      <li class="l2 it"><svg class="i16"><use href="#used"/></svg><input type="radio" name="att" id="a16"><label for="a16">Used by dep.</label></li>
      <li class="l2 it"><svg class="i16"><use href="#used"/></svg><input type="radio" name="att" id="a17"><label for="a17">Used by geo.</label></li>
      <li class="l2"><svg class="i16"><use href="#phi"/></svg><input type="radio" name="att" id="a18"><label for="a18">POR</label></li>
      <li class="l2 bold"><svg class="i16"><use href="#perm"/></svg><input type="radio" name="att" id="a19"><label for="a19">PERM</label></li>
      <li class="l1 it bold"><svg class="twist" viewBox="0 0 8 8"><path d="M7 1v6H1z" fill="#222"/></svg><svg class="i16"><use href="#strat"/></svg><input type="checkbox" id="c1" checked><label for="c1">Stratigraphy</label></li>
      <li class="l2"><svg class="i16 rockblue"><use href="#rock"/></svg><input type="checkbox" id="c2" checked><label for="c2">Montney</label></li>
      <li class="l2 it"><svg class="i16"><use href="#zone"/></svg><i class="nobox"></i><span>Zone Montney</span></li>
      <li class="l2"><svg class="i16 rockgreen"><use href="#rock"/></svg><input type="checkbox" id="c3" checked><label for="c3">Belloy</label></li>
      <li class="l1 it"><i class="twist"></i><svg class="i16"><use href="#faults"/></svg><i class="nobox"></i><span>Faults</span></li>
      <li class="l1 it"><i class="twist"></i><svg class="i16"><use href="#others"/></svg><i class="nobox"></i><span>Others</span></li>
      <li class="l1 it"><svg class="twist" viewBox="0 0 8 8"><path d="M2 .5L6.500 4 2 7.500z" fill="#fff" stroke="#999"/></svg><svg class="i16"><use href="#wells"/></svg><input type="checkbox" id="c4" checked><label for="c4">Well filter</label></li>
      <li class="l1 it"><svg class="twist" viewBox="0 0 8 8"><path d="M2 .5L6.500 4 2 7.500z" fill="#fff" stroke="#999"/></svg><svg class="i16"><use href="#funnel"/></svg><input type="checkbox" id="c5" checked><label for="c5">Interpreter filter</label></li>
      <li class="l0 bold"><svg class="i16"><use href="#phi"/></svg><input type="checkbox" id="c6"><label for="c6">Zone Montney (POR)</label></li>
      <li class="l0"><svg class="i16"><use href="#perm"/></svg><input type="checkbox" id="c7"><label for="c7">Zone Montney (PERM)</label></li>
      <li class="l0 bold"><svg class="i16 ln1"><use href="#lines"/></svg><input type="checkbox" id="c8"><label for="c8">WOODMAC</label></li>
      <li class="l0"><svg class="i16 ln2"><use href="#lines"/></svg><input type="checkbox" id="c9"><label for="c9">WOODMAC-北</label></li>
      <li class="l0"><svg class="i16 ln3"><use href="#lines"/></svg><input type="checkbox" id="c10"><label for="c10">WOODMAC-东1</label></li>
      <li class="l0"><svg class="i16 ln4"><use href="#lines"/></svg><input type="checkbox" id="c11"><label for="c11">WOODMAC-东2</label></li>
      <li class="l0"><svg class="i16 ln5"><use href="#lines"/></svg><input type="checkbox" id="c12"><label for="c12">WOODMAC-南</label></li>
      <li class="l0"><svg class="i16 ln6"><use href="#lines"/></svg><input type="checkbox" id="c13"><label for="c13">WOODMAC-中</label></li>
      <li class="l0"><svg class="i16"><use href="#phi"/></svg><input type="checkbox" id="c14" checked><label for="c14" class="selected">SurfacePOR</label></li>
    </ul>
    <div class="track"><div class="thumb"></div></div>
    </div>
    <div class="pane-tabs">
      <button class="ptab current"><svg class="i16"><use href="#folder"/></svg>Input</button>
      <button class="ptab"><svg class="i16"><use href="#cases"/></svg>Cases</button>
      <button class="ptab"><svg class="i16"><use href="#templates"/></svg>Templates</button>
    </div>
    <header class="pane-head models"><span class="grip"></span><svg class="i16"><use href="#models"/></svg><b>Models</b></header>
    <div class="emptybox"></div>
  </section>

  <section class="viewer">
    <div class="doc-tabs"><button class="doc-tab"><svg class="i16"><use href="#icon2d"/></svg>2D window 1 [Any]<svg class="i10"><use href="#cross"/></svg></button></div>
    <div class="canvas">
      <svg class="map" aria-hidden="true">
        <defs>
          <linearGradient id="m1"><stop offset="0" stop-color="#00d0f0"/><stop offset="1" stop-color="#00b0f0"/></linearGradient>
          <linearGradient id="m2"><stop offset="0" stop-color="#08a0f0"/><stop offset="1" stop-color="#0070f0"/></linearGradient>
          <linearGradient id="m3" x1="0" y1="0" x2="0" y2="1"><stop offset="0" stop-color="#0880e8"/><stop offset=".07" stop-color="#00b8e0"/><stop offset=".12" stop-color="#0090f0"/><stop offset=".4" stop-color="#0098f0"/><stop offset=".5" stop-color="#00b8b8"/><stop offset=".7" stop-color="#00c098"/><stop offset=".77" stop-color="#a8b800"/><stop offset=".84" stop-color="#20c080"/><stop offset=".92" stop-color="#00b0c8"/><stop offset="1" stop-color="#0080e8"/></linearGradient>
          <linearGradient id="m4" x1="0" y1="0" x2="0" y2="1"><stop offset="0" stop-color="#00a0f0"/><stop offset=".15" stop-color="#0868e0"/><stop offset=".25" stop-color="#00c8d8"/><stop offset=".4" stop-color="#10c840"/><stop offset=".55" stop-color="#10c880"/><stop offset=".65" stop-color="#00c8c8"/><stop offset="1" stop-color="#00c0c8"/></linearGradient>
          <radialGradient id="m5"><stop offset="0" stop-color="#e0d000"/><stop offset=".5" stop-color="#80c010"/><stop offset="1" stop-color="#00c8c0" stop-opacity="0"/></radialGradient>
        </defs>
        <path d="M113 113l30 1 64 8v10h-92z" fill="url(#m1)"/>
        <path d="M216 117l19-11 6 2 6-3 7 6 48-5 12 9v18h-95z" fill="url(#m2)"/>
        <path d="M331 119l4-6 6 5 2-8 10 5 3 18h-25z" fill="#0078f0"/>
        <path d="M412 192l8 2v570h-8z" fill="url(#m3)"/>
        <path d="M412 262h9M412 318h9M412 440h9M412 470h9M412 520h9M412 600h9M412 625h9M412 650h9M412 675h9" stroke="#000"/>
        <path d="M785 607l8 4 6 8v246h-14z" fill="url(#m4)"/>
        <path d="M471 840h330v30H486z" fill="#00c4cc"/>
        <path d="M550 840h100q-30 20-70 22z" fill="#0098c0" opacity=".6"/>
        <ellipse cx="757" cy="864" rx="38" ry="26" fill="url(#m5)"/>
        <g fill="none" stroke="#000" stroke-width="1.200">
          <path d="M560 842q6 20 32 22M661 842q-8 12-30 24M692 842q-2 14 14 24M707 842q0 12 10 4 6-6 12 4M742 866q6-12 16-12t14 12M737 866q8-16 21-16t18 16M731 866q10-20 27-20t22 20M725 866q12-24 33-24t27 24"/>
          <path d="M799 622q-10 12-8 18l8 6M785 640l14 6M785 645l14 4M785 650l14 2M785 655h14M785 660l14-3M785 668q12-4 14-2M785 690q14-8 14 20t-12 28M785 760q10-4 14-16M785 775q10-2 14 8M792 800q-6 8 8 14M785 830q10-8 14-2"/>
        </g>
      </svg>
      <div class="toolbar">
        <button class="tool active"><svg class="i16"><use href="#hand"/></svg></button>
        <svg class="slim"><use href="#pointer"/></svg>
        <svg class="i16"><use href="#ruler"/></svg>
        <svg class="i16"><use href="#layers"/></svg>
        <svg class="i16"><use href="#swap"/></svg>
        <svg class="i16"><use href="#rr"/></svg><span class="vsep"></span>
        <svg class="i16"><use href="#lamp"/></svg><span class="vsep"></span>
        <span class="picker"><select aria-label="Filter"><option>Any</option></select></span>
        <svg class="i16"><use href="#home"/></svg><svg class="caret"><use href="#caret"/></svg>
        <svg class="i16"><use href="#eye"/></svg>
        <svg class="i16"><use href="#cube"/></svg><svg class="caret"><use href="#caret"/></svg>
        <svg class="i16"><use href="#zoombox"/></svg>
        <svg class="i16"><use href="#target"/></svg>
        <span class="picker short"><select aria-label="Exaggeration"><option>1</option></select></span>
        <svg class="i16"><use href="#linkpts"/></svg><svg class="caret"><use href="#caret"/></svg>
        <svg class="i16"><use href="#binoc"/></svg><svg class="caret"><use href="#caret"/></svg><span class="vsep"></span>
        <svg class="i16"><use href="#eraser"/></svg>
        <svg class="i16"><use href="#axes"/></svg><svg class="caret"><use href="#caret"/></svg>
        <svg class="i16"><use href="#comment"/></svg><svg class="caret"><use href="#caret"/></svg>
        <svg class="i16"><use href="#camera"/></svg><svg class="caret"><use href="#caret"/></svg><span class="vsep"></span>
        <svg class="i16"><use href="#eyex"/></svg>
      </div>
    </div>
  </section>
</main>

<section class="dialog surface-dialog">
  <header class="dlg-title"><svg class="i16"><use href="#phi"/></svg><h2>Settings for 'SurfacePOR'</h2><svg class="i12"><use href="#thincross"/></svg></header>
  <div class="dlg-tabs">
    <div class="tabrow row1">
      <button class="dtab"><svg class="i16"><use href="#fx"/></svg><span>Operations</span></button>
      <button class="dtab"><svg class="i16"><use href="#foldersearch"/></svg><span>Calculations</span></button>
      <button class="dtab"><svg class="i16"><use href="#foldersearch"/></svg><span>More</span></button>
      <button class="dtab"><svg class="i16"><use href="#vario"/></svg><span>Variogram</span></button>
    </div>
    <div class="tabrow row2">
      <button class="dtab"><span>Stratigraphy</span></button>
      <button class="dtab"><span>Quality attributes</span></button>
      <button class="dtab"><span>Structural analysis</span></button>
    </div>
    <div class="tabrow row3">
      <button class="dtab"><svg class="i16"><use href="#brush"/></svg><span>Style</span></button>
      <button class="dtab"><svg class="i16"><use href="#info"/></svg><span>Info</span></button>
      <button class="dtab"><svg class="i16"><use href="#stats"/></svg><span>Statistics</span></button>
      <button class="dtab"><svg class="i16"><use href="#histo"/></svg><span>Histogram</span></button>
      <button class="dtab current"><svg class="ibar"><use href="#colorbar"/></svg><span>Colors</span></button>
    </div>
  </div>
  <div class="dlg-panel">
    <p class="hint">This object uses global color table 'General continuous'.</p>
    <div class="opt"><input type="radio" class="win" name="ct" id="g1" checked><label for="g1">Global (shared) color ta</label>
      <span class="combo table-combo"><i class="swatch rainbow"></i><select aria-label="Color table"><option>General continuous</option></select></span>
      <button class="iconbtn focus"><svg class="i16"><use href="#palette"/></svg></button><button class="help">?</button></div>
    <div class="opt"><input type="radio" class="win" name="ct" id="g2"><label for="g2">Local (private) color ta</label>
      <button class="mk" disabled><svg class="i16"><use href="#palette"/></svg>Make global</button></div>
  </div>
  <footer class="dlg-foot">
    <button class="push-btn"><svg class="i14"><use href="#check"/></svg>Apply</button>
    <button class="push-btn"><svg class="i14"><use href="#check"/></svg>OK</button>
    <button class="push-btn"><svg class="i14"><use href="#redx"/></svg>Cancel</button>
  </footer>
</section>

<section class="dialog color-dialog">
  <header class="dlg-title"><svg class="ibar"><use href="#colorbar"/></svg><h2>Settings for 'General continuous'</h2><svg class="i12"><use href="#thincross"/></svg></header>
  <div class="tabrow simple">
    <button class="dtab"><svg class="i16"><use href="#info"/></svg><span>Info</span></button>
    <button class="dtab current"><svg class="ibar"><use href="#colorbar"/></svg><span>Colors</span></button>
  </div>
  <div class="dlg-panel">
    <div class="top-row">
      <div class="limits"><div class="cap">Min/max limits:</div>
        <div class="boxed">
          <div class="ropt"><input type="radio" class="win" name="lim" id="m-1" checked><label for="m-1">Limits defined in color table</label></div>
          <div class="ropt"><input type="radio" class="win" name="lim" id="m-2"><label for="m-2">Use limits from property template</label></div>
          <div class="ropt"><input type="radio" class="win" name="lim" id="m-3"><label for="m-3">Auto-scale color table to data</label></div>
        </div></div>
      <button class="help">?</button>
    </div>
    <div class="editor">
      <div class="controls">
        <div class="limit upper"><input class="num" aria-label="Maximum" value="20"><button class="chip"><i class="swatch red"></i><svg class="caret"><use href="#caret"/></svg></button><i class="tri"></i><i class="leader"></i></div>
        <div class="cap interp-cap">Color interpolation</div>
        <div class="boxed interp">
          <div class="ropt"><input type="radio" class="win" name="int" id="i-1" checked><label for="i-1">HSV (Max)</label></div>
          <div class="ropt"><input type="radio" class="win" name="int" id="i-2"><label for="i-2">HSV (Min)</label></div>
          <div class="ropt"><input type="radio" class="win" name="int" id="i-3"><label for="i-3">RGB</label></div>
        </div>
        <div class="copt first"><input type="checkbox" class="win" id="k-1" checked><label for="k-1">Emphasize</label></div>
        <div class="copt"><input type="checkbox" class="win" id="k-2"><label for="k-2">Non linear gradient</label></div>
        <div class="slide"><label for="s-s">S:</label><input type="range" id="s-s" value="0"></div>
        <div class="slide"><label for="s-v">V:</label><input type="range" id="s-v" value="0"></div>
        <div class="limit lower"><input class="num" aria-label="Minimum" value="0"><button class="chip"><i class="swatch magenta"></i><svg class="caret"><use href="#caret"/></svg></button><i class="tri"></i><i class="leader"></i></div>
      </div>
      <svg class="axis" viewBox="0 0 28 452">
        <g class="nums"><text x="11" y="14">20</text><text x="11" y="58">18</text><text x="11" y="102">16</text><text x="11" y="146">14</text><text x="11" y="190">12</text><text x="11" y="234">10</text><text x="11" y="278">8</text><text x="11" y="322">6</text><text x="11" y="366">4</text><text x="11" y="410">2</text><text x="11" y="454">0</text></g>
        <path d="M0 10.500h12M0 450.500h12" stroke="#000"/>
        <rect x="12" y="15" width="8" height="430" fill="#686868"/>
        <path d="M23 10v441" stroke="#000" stroke-width="6" stroke-dasharray="1 7.800"/>
        <path d="M20 10v441" stroke="#000" stroke-width="12" stroke-dasharray="1 43"/>
        <path d="M12.500 5.500h6v10h-6zM18.500 5.500l6 5-6 5zM12.500 445.500h6v6h-6zM18.500 445.500l6 5-6 5z" fill="#fff" stroke="#38a038" stroke-width="1.500"/>
      </svg>
      <div class="ramp"></div>
      <div class="opacity"><span>100.00%</span></div>
      <div class="tools">
        <button class="iconbtn"><svg class="i16"><use href="#arrowleft"/></svg></button><span class="tlabel gap">Max</span>
        <button class="iconbtn"><svg class="i14"><use href="#check"/></svg></button>
        <button class="iconbtn"><svg class="i16"><use href="#legend"/></svg></button>
        <button class="iconbtn"><svg class="i16"><use href="#log"/></svg></button>
        <button class="iconbtn"><svg class="i14"><use href="#turn"/></svg></button>
        <button class="iconbtn pressed"><svg class="i16"><use href="#lockaxis"/></svg></button>
        <button class="iconbtn"><svg class="i16"><use href="#lockzero"/></svg></button><hr>
        <button class="iconbtn"><svg class="i16"><use href="#magnet"/></svg></button>
        <button class="iconbtn"><svg class="i14"><use href="#redx"/></svg></button>
        <button class="iconbtn"><svg class="i16"><use href="#nodes"/></svg></button>
        <button class="iconbtn"><svg class="i16"><use href="#curve"/></svg></button><hr>
        <button class="iconbtn dim"><svg class="i16"><use href="#pagebrush"/></svg></button>
        <button class="iconbtn"><svg class="i16"><use href="#page"/></svg></button>
        <button class="iconbtn blue"><svg class="i16"><use href="#undo"/></svg></button>
        <button class="iconbtn dim gray"><svg class="i16"><use href="#redo"/></svg></button>
        <span class="tlabel bottom">Min</span>
        <button class="iconbtn"><svg class="i16"><use href="#arrowleft"/></svg></button>
      </div>
      <div class="scale-names"><span>Color</span><span>Opacity</span><svg class="i10 flip"><use href="#arrowleft"/></svg></div>
    </div>
    <div class="last-row">
      <span>Undefined:</span><button class="chip"><i class="swatch silver"></i><svg class="caret"><use href="#caret"/></svg></button>
      <span class="combo pct"><select aria-label="Undefined opacity"><option>100%</option></select></span>
      <span class="combo pct second"><select aria-label="Opacity"><option>100%</option></select></span>
      <button class="help">?</button>
    </div>
  </div>
  <footer class="dlg-foot">
    <button class="push-btn default"><svg class="i14"><use href="#check"/></svg>Apply</button>
    <button class="push-btn"><svg class="i14"><use href="#check"/></svg>OK</button>
    <button class="push-btn"><svg class="i14"><use href="#redx"/></svg>Cancel</button>
  </footer>
</section>

<svg class="marks" aria-hidden="true">
  <path d="M145 812L597 385" stroke="#f02020" stroke-width="1.300"/><path d="M607 377l-6 15-5-5-5-5z" fill="#f01010"/>
  <path d="M824 391l-64 37" stroke="#f02020" stroke-width="1.300"/><path d="M746 437l9-12 5 10z" fill="#f01010"/>
  <path d="M702 483h146v41H702zM704 917h128v31H704z" fill="none" stroke="#f01010" stroke-width="2"/>
</svg>
</body>
</html>
```
FILE: styles.css
```css
* { box-sizing: border-box; }
html, body { height: 100%; }
body {
  margin: 0;
  position: relative;
  display: flex;
  flex-direction: column;
  overflow: hidden;
  background: #f0f0f0;
  color: #000;
  font: 10px/14px "Liberation Mono", "Noto Sans CJK SC", monospace;
}
button { margin: 0; padding: 0; border: 0; background: none; font: inherit; color: inherit; }
h1, h2, p, ul { margin: 0; padding: 0; font-weight: normal; }
svg { display: block; flex: none; overflow: visible; }
.sprite { position: absolute; width: 0; height: 0; }
.i16 { width: 16px; height: 16px; }
.slim { width: 10px; height: 16px; }
.i14 { width: 13px; height: 13px; }
.i12 { width: 12px; height: 12px; }
.i10 { width: 10px; height: 10px; }
.ibar { width: 8px; height: 16px; }
.caret { width: 6px; height: 4px; margin: 0 -2px; }
.gray { color: #999; }
.vsep { width: 1px; height: 12px; background: #999; }

/* title bar */
.titlebar { height: 27px; flex: none; display: flex; align-items: flex-start; background: #fff; padding-left: 1px; position: relative; }
.quick { display: flex; align-items: center; gap: 6px; height: 24px; }
.quick .more { border-top: 1px solid #000; height: 6px; padding-top: 1px; margin-left: 0; }
.app-title { position: absolute; left: 594px; top: 4px; font: 13px/18px Roboto, "Noto Sans", sans-serif; white-space: nowrap; }

/* ribbon */
.ribbon-tabs {
  flex: none;
  height: 24px;
  padding-left: 4px;
  display: grid;
  grid-template-columns: 58px 51px 83px 143px 132px 115px 131px 124px 121px 83px 1fr;
  background: #363636;
  overflow: hidden;
}
.rtab { color: #fff; font: 11px/20px "Noto Sans", sans-serif; white-space: nowrap; margin-top: 2px; }
.rtab.file { background: linear-gradient(#ffd800, #f8a800); color: #222; }
.rtab.current { background: #f0f0f0; color: #222; }
.rtab.last { text-align: left; padding-left: 9px; }
.ribbon {
  flex: none;
  height: 91px;
  display: grid;
  grid-template-columns: 195px 170px 92px 69px 106px 160px 138px 56px 81px 1fr;
  border-left: 2px solid #666;
  border-bottom: 3px solid #515155;
  overflow: hidden;
  font: 11px/15px "Noto Sans", sans-serif;
}
.group { border-right: 1px solid #999; display: flex; flex-direction: column; min-width: 0; }
.gbody { flex: 1; display: flex; padding-left: 4px; }
.gbody.snug { padding-left: 2px; }
.gbody.centered { justify-content: center; padding: 0; }
.glabel { height: 16px; background: #e6e6e6; text-align: center; white-space: nowrap; position: relative; }
.glabel.off { padding-right: 16px; }
.launch { position: absolute; right: 6px; top: 5px; width: 8px; height: 8px; }
.big { padding-top: 2px; white-space: nowrap; line-height: 15px; display: block; text-align: center; }
.bigicon { width: 29px; height: 29px; margin: 0 auto 5px; }
.narrow { width: 34px; }
.mid { width: 56px; }
.wide { width: 68px; }
.wider { width: 88px; }
.widest { width: 74px; }
.disabled { color: #888; }
.below { margin: 8px auto 0; }
.rows { flex: 1; padding: 1px 3px 0 5px; }
.small { display: flex; align-items: center; gap: 9px; height: 23px; width: 100%; white-space: nowrap; }
.small .push { margin-left: auto; }
.icons { display: grid; grid-auto-rows: 16px; gap: 7px 6px; padding: 5px 0 0 8px; align-content: start; }
.centered .icons { padding-left: 0; }
.icons.tight { padding-left: 4px; }
.two { grid-template-columns: 16px 16px; }

/* workspace */
.workspace { flex: 1; min-height: 0; display: flex; }
.rail { width: 22px; flex: none; background: #e7e8eb; border-left: 1px solid #777; padding: 1px 2px 0 0; }
.vtab { display: flex; flex-direction: column; align-items: center; gap: 5px; width: 19px; padding: 1px 0 4px; border: 1px solid #aaa; border-left: 0; }
.vtab + .vtab { border-top: 0; }
.vtab.apart { margin-top: 12px; border-top: 1px solid #aaa; }
.vtab span { writing-mode: vertical-rl; font-weight: bold; line-height: 14px; }

.explorer { width: 251px; flex: none; display: flex; flex-direction: column; min-height: 0; border-right: 3px solid #f8f8f8; }
.pane-head { flex: none; height: 25px; display: flex; align-items: center; gap: 3px; padding: 0 8px 0 3px; background: linear-gradient(90deg, #ececec, #dcdcdc); }
.grip { width: 2px; height: 14px; margin-right: 1px; border-left: 2px dotted #888; }
.pane-tools { margin-left: auto; display: flex; align-items: center; gap: 11px; }
.wide-caret { width: 8px; height: 5px; }
.treebox { flex: none; height: 662px; display: flex; background: #fff; border: 1px solid #888c94; overflow: hidden; }
.tree { flex: 1; list-style: none; overflow: hidden; }
.tree li { height: 18px; display: flex; align-items: center; white-space: pre; }
.tree label, .tree span { padding-top: 2px; }
.tree input, .nobox { margin: 0 6px 0 5px; flex: none; width: 13px; height: 13px; }
.tree input { appearance: none; border: 1px solid #3a7078; background: #ffffb4; display: grid; place-content: center; }
.tree input[type=radio] { border-radius: 50%; }
.tree input[type=radio]:checked::before { content: ""; width: 5px; height: 5px; border-radius: 50%; background: #900090; }
.tree input[type=checkbox]:checked::before { content: ""; width: 8px; height: 4px; border: solid #800080; border-width: 0 0 2px 2px; transform: rotate(-45deg); margin-top: -2px; }
.tree input[type=checkbox] { background: #ffffd0; }
.tree .l0 input[type=checkbox] { background: #e4e8e8; }
.l0 { padding-left: 19px; }
.l1 { padding-left: 25px; }
.l2 { padding-left: 57px; }
.twist { width: 8px; height: 8px; margin-right: 5px; }
.it { font-style: italic; }
.bold { font-weight: bold; }
.violet { color: #c000c0; }
.tree .selected { background: #c8c4ea; line-height: 15px; margin-left: -2px; padding: 1px 2px 0; }
.rockblue { color: #40a8f0; }
.rockgreen { color: #30d098; }
.ln1 { color: #1080c8; } .ln2 { color: #10b888; } .ln3 { color: #88c010; }
.ln4 { color: #c08810; } .ln5 { color: #c870c8; } .ln6 { color: #7878c8; }
.track { width: 17px; background: #f0f0f0; padding: 66px 7px 0 8px; }
.thumb { width: 2px; height: 420px; background: #888; }
.pane-tabs { flex: none; display: flex; height: 23px; margin-top: 3px; padding: 0 0 0 3px; border-bottom: 1px solid #aaa; overflow: hidden; }
.ptab { display: flex; align-items: center; gap: 5px; padding: 0 4px 0 1px; border: 1px solid #999; border-left: 0; height: 21px; }
.ptab.current { border: 1px solid #000; border-width: 0 1px 1px 0; }
.models { height: 25px; border-top: 1px solid #bbb; margin-top: 2px; gap: 2px; background: #eaeaea; }
.emptybox { flex: 1; background: #fff; border: 1px solid #888c94; }

.viewer { flex: 1; min-width: 0; display: flex; flex-direction: column; background: #535353; border-left: 2px solid #999; }
.doc-tabs { flex: none; height: 24px; padding: 3px 0 0 2px; border-bottom: 1px solid #999; }
.doc-tab { display: flex; align-items: center; gap: 3px; width: 153px; height: 21px; padding-left: 2px; background: linear-gradient(#ffd428, #eca428); color: #3c2c10; }
.doc-tab .i10:last-child { margin-left: 11px; color: #000; }
.canvas { flex: 1; position: relative; min-height: 0; margin-left: 2px; background: #000; display: flex; justify-content: flex-end; align-items: flex-start; overflow: hidden; }
.map { position: absolute; inset: 0; width: 100%; height: 100%; }
.toolbar { position: relative; flex: 0 0 619px; height: 26px; display: flex; align-items: center; gap: 6px; padding-left: 2px; background: linear-gradient(#f0f0f0, #e2e2e2); border-bottom: 1px solid #888; }
.tool { width: 22px; height: 22px; padding: 2px; border: 1px solid #c09030; border-radius: 2px; background: #ffe488; }
.toolbar .vsep { margin: 0 -1px 0 0; }
.picker { position: relative; width: 54px; margin-right: -1px; }
.picker.short { width: 45px; margin: 0 -2px; }
.picker::after { content: ""; position: absolute; right: 4px; top: 9px; border: 3px solid transparent; border-top-color: #777; }
select { appearance: none; width: 100%; height: 100%; border: 0; background: none; font: inherit; color: inherit; padding: 0 4px; }
.picker select { height: 20px; background: #fff; border: 1px solid #bbb; font: 12px/16px "Noto Sans", sans-serif; }

/* dialogs */
.dialog { position: absolute; background: #f0f0f0; border: 1px solid #888; border-radius: 8px; overflow: hidden; display: flex; flex-direction: column; box-shadow: 0 6px 26px rgba(0,0,0,.3); }
.surface-dialog { left: 177px; top: 290px; width: 515px; height: 742px; }
.color-dialog { left: 698px; top: 332px; width: 364px; height: 677px; }
.dlg-title { flex: none; height: 29px; display: flex; align-items: center; gap: 9px; padding: 0 9px 0 7px; background: #fff; }
.dlg-title h2 { flex: 1; font: 12px/18px "Noto Sans", sans-serif; }
.surface-dialog .dlg-title { color: #888; }
.color-dialog .dlg-title { gap: 14px; padding-left: 10px; }
.dlg-tabs { margin: 5px 4px 0; position: relative; }
.tabrow { display: grid; }
.row1 { grid-template-columns: 135px 149px 93px 1fr; }
.row2 { grid-template-columns: 138px 180px 1fr; }
.row3 { grid-template-columns: 89px 81px 123px 114px 1fr; }
.dtab { display: flex; align-items: center; height: 19px; background: #e7e8eb; border: 1px solid #999; border-right-width: 2px; border-bottom: 0; padding: 0 3px; }
.dtab span { flex: 1; text-align: center; padding-top: 2px; }
.row3 .current { background: #f9f9f9; height: 21px; margin: -2px -2px 0 0; padding-left: 8px; position: relative; border-right-width: 1px; }
.simple { grid-template-columns: 62px 79px; margin: 2px 0 0 4px; align-items: end; }
.simple .dtab { height: 20px; }
.simple .current { height: 22px; background: #f9f9f9; padding-left: 6px; border-right-width: 1px; }
.dlg-panel { flex: 1; margin: 0 2px; background: #f9f9f9; border: 1px solid #8a8c96; min-height: 0; display: flex; flex-direction: column; }
.tabrow .current { margin-bottom: -1px; z-index: 1; }
.dlg-foot { flex: none; display: flex; justify-content: flex-end; gap: 8px; padding: 6px 26px 5px 0; }
.surface-dialog .dlg-foot { padding: 6px 27px 4px 0; }
.push-btn { width: 73px; height: 20px; display: flex; align-items: center; gap: 3px; padding-left: 8px; background: #fdfdfd; border: 1px solid #ccc; border-radius: 3px; }
.push-btn:nth-child(2) { padding-left: 12px; }
.push-btn:nth-child(3) { padding-left: 6px; }
.push-btn.default { border-color: #0067c0; }
.hint { padding: 4px 0 3px 7px; }
.opt { display: flex; align-items: center; height: 20px; padding-left: 8px; }
.opt label { flex: none; width: 146px; white-space: nowrap; margin-right: 2px; }
input.win { appearance: none; flex: none; width: 13px; height: 13px; margin: 0; border: 1px solid #777; background: #fff; border-radius: 50%; }
input.win:checked { border: 4px solid #0060b8; }
.opt input.win { margin-right: 7px; }
.combo { display: flex; align-items: center; position: relative; height: 19px; background: #fff; border: 1px solid #999; }
.combo::after { content: ""; position: absolute; right: 6px; top: 4px; width: 6px; height: 6px; border: solid #666; border-width: 0 1px 1px 0; transform: rotate(45deg); }
.table-combo { width: 244px; padding-left: 2px; margin-right: 30px; }
.table-combo select { padding-left: 6px; }
.swatch { display: block; flex: none; }
.rainbow { width: 64px; height: 13px; background: linear-gradient(90deg, #f0f, #60f 15%, #00f 21%, #0ff 42%, #0f6 58%, #3f0 62%, #ff0 80%, #f80 92%, #f00); }
.iconbtn { flex: none; width: 22px; height: 20px; display: grid; place-content: center; border: 1px solid #ccc; border-radius: 3px; background: #fdfdfd; }
.iconbtn.focus { border-color: #0067c0; margin-right: 8px; }
.help { flex: none; width: 20px; height: 18px; background: linear-gradient(135deg, #88a8d0, #60a8f8 60%, #88c0ff); border: 1px solid #98b8e0; color: #fff; font: bold 14px/16px "Liberation Sans", sans-serif; }
.mk { display: flex; align-items: center; width: 101px; height: 18px; padding-left: 2px; border: 1px solid #ddd; border-radius: 3px; color: #777; filter: grayscale(1); }

.top-row { display: flex; justify-content: space-between; align-items: flex-start; padding: 32px 6px 0 9px; height: 101px; flex: none; }
.top-row .help { margin-top: 5px; }
.boxed { border: 1px solid #ddd; overflow: hidden; white-space: nowrap; }
.limits .boxed { width: 197px; height: 49px; padding-left: 13px; }
.ropt { display: flex; align-items: center; gap: 4px; height: 15px; }
.ropt label { padding-top: 1px; }
.editor { display: grid; grid-template-columns: 153px 28px 35px 101px 1fr; grid-template-rows: 451px 15px; column-gap: 0; flex: none; }
.controls { display: flex; flex-direction: column; padding-left: 6px; height: 458px; }
.limit { display: flex; align-items: center; position: relative; height: 20px; flex: none; }
.num { width: 51px; height: 20px; border: 1px solid #ddd; border-bottom-color: #888; background: #fff; padding: 0 2px; font: 12px/16px "Noto Sans", sans-serif; margin-right: 9px; }
.upper::after, .lower::before { content: ""; position: absolute; left: 0; width: 107px; height: 1px; background: #999; bottom: -2px; }
.lower::before { bottom: auto; top: -5px; }
.chip { display: flex; align-items: center; width: 47px; height: 17px; padding-left: 2px; border: 1px solid #ccc; border-radius: 3px; background: #fdfdfd; }
.chip .swatch { width: 28px; height: 11px; border: 1px solid #000; margin-right: 2px; }
.chip .caret { margin: 0 0 0 4px; }
.red { background: #f00; } .magenta { background: #f0f; } .silver { background: #c0c0c0; }
.tri { width: 6px; height: 10px; margin: 0 2px; background: #333; clip-path: polygon(100% 0, 100% 100%, 0 50%); }
.leader { flex: 1; height: 1px; background: #000; }
.interp-cap { margin: 66px 0 3px 2px; }
.interp { width: 106px; padding: 1px 0 3px 13px; flex: none; }
.copt { display: flex; align-items: center; gap: 5px; height: 15px; width: 118px; overflow: hidden; white-space: nowrap; flex: none; }
.copt.first { margin-top: 3px; }
.copt input.win { border-radius: 2px; display: grid; place-content: center; }
.copt input.win:checked { border: 0; background: #0060b8; }
.copt input.win:checked::before { content: ""; width: 7px; height: 3px; border: solid #fff; border-width: 0 0 1px 1px; transform: rotate(-45deg); margin-top: -2px; }
.slide { display: flex; align-items: center; gap: 12px; height: 28px; padding-left: 5px; flex: none; }
.copt + .slide { margin-top: 21px; }
.slide input { appearance: none; width: 81px; height: 20px; margin: 0; background: linear-gradient(#d8d8d8, #d8d8d8) center/100% 3px no-repeat; }
.slide input::-webkit-slider-thumb { appearance: none; width: 11px; height: 19px; background: #0078d8; clip-path: polygon(0 0, 100% 0, 100% 70%, 50% 100%, 0 70%); }
.lower { margin-top: auto; }
.axis { width: 28px; height: 452px; }
.nums { font: 9px "Liberation Sans", sans-serif; text-anchor: end; }
.ramp { margin-top: 7px; height: 444px; width: 34px; border-top: 1px solid #888; background: linear-gradient(#ff2800, #ff9000 11%, #ffff00 20%, #80ff00 32%, #28f800 39.500%, #00ff20 40.500%, #00ff90 49%, #00ffff 60%, #00a8ff 70%, #0040ff 78%, #1000f8 80%, #6000ff 84%, #b000ff 91%, #ff00ff 98%); }
.opacity { margin: 6px 4px 0 5px; width: 100px; height: 445px; background: linear-gradient(#000, #000) 95px 0/1px 100% no-repeat #fff; border: solid #000; border-width: 2px 0; display: flex; align-items: flex-end; padding-left: 6px; color: #666; position: relative; }
.opacity::before, .opacity::after { content: ""; position: absolute; left: 92px; top: -1px; width: 7px; height: 5px; background: #000; }
.opacity::after { top: auto; bottom: -1px; }
.tools { display: flex; flex-direction: column; align-items: flex-start; gap: 4px; padding-left: 11px; height: 460px; }
.tools hr { width: 24px; margin: 0; border: 0; border-top: 1px solid #999; }
.tlabel.gap { margin: -2px 0 22px; }
.tlabel.bottom { margin: auto 0 -3px; }
.pressed { border-color: #0060a0; background: #ffd8a8; }
.dim { opacity: .7; }
.blue { color: #1890c8; }
.scale-names { grid-column: 3 / 5; grid-row: 2; display: flex; gap: 6px; padding: 2px 0 0 2px; }
.flip { transform: scaleX(-1); margin: 2px 0 0 -4px; }
.last-row { display: flex; align-items: center; flex: none; height: 20px; padding: 0 6px 0 7px; }
.last-row .help { margin-left: auto; }
.pct { width: 56px; margin-left: 7px; }
.pct.second { margin-left: 41px; }

.marks { position: absolute; inset: 0; width: 100%; height: 100%; pointer-events: none; filter: drop-shadow(3px 3px 2px rgba(0,0,0,.4)); }
```
